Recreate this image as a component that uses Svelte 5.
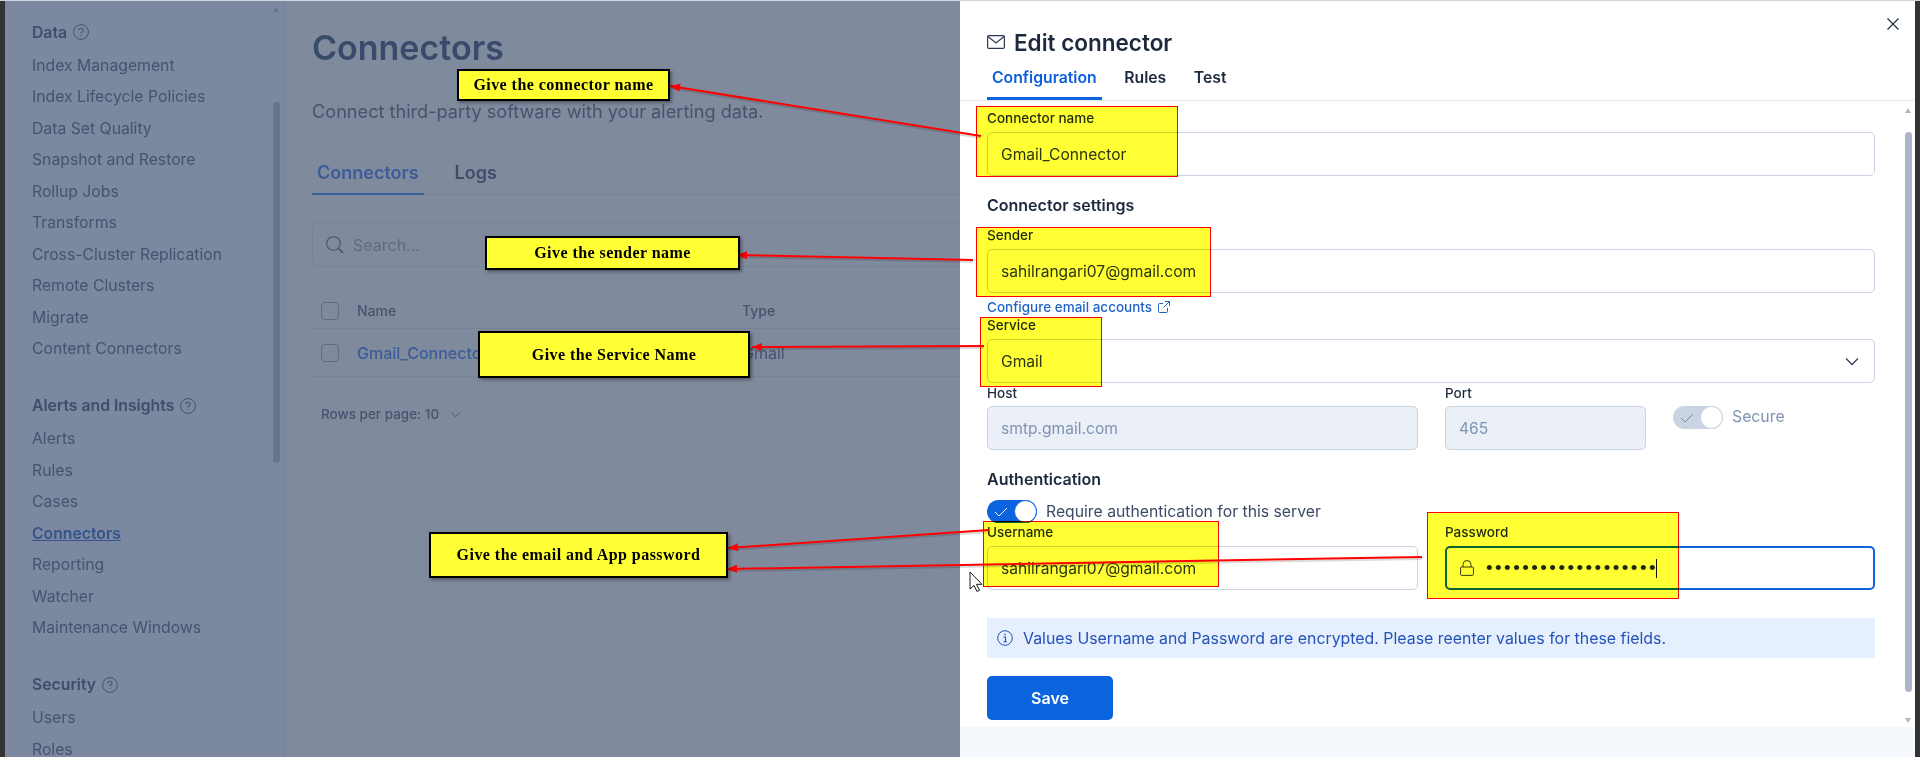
<script>
  const sections = [
    { title: 'Data', items: ['Index Management', 'Index Lifecycle Policies', 'Data Set Quality', 'Snapshot and Restore', 'Rollup Jobs', 'Transforms', 'Cross-Cluster Replication', 'Remote Clusters', 'Migrate', 'Content Connectors'] },
    { title: 'Alerts and Insights', items: ['Alerts', 'Rules', 'Cases', 'Connectors', 'Reporting', 'Watcher', 'Maintenance Windows'] },
    { title: 'Security', items: ['Users', 'Roles'] }
  ];
  const highlights = [
    { k: 'h1', x: 976, y: 106, w: 202, h: 71 },
    { k: 'h2', x: 976, y: 227, w: 235, h: 70 },
    { k: 'h3', x: 980, y: 317, w: 122, h: 70 },
    { k: 'h4', x: 983, y: 521, w: 236, h: 66 },
    { k: 'h5', x: 1427, y: 512, w: 252, h: 87 }
  ];
  const callouts = [
    { t: 'Give the connector name', x: 457, y: 69, w: 213, h: 32 },
    { t: 'Give the sender name', x: 485, y: 236, w: 255, h: 34 },
    { t: 'Give the Service Name', x: 478, y: 331, w: 272, h: 47 },
    { t: 'Give the email and App password', x: 429, y: 532, w: 299, h: 46 }
  ];
  const arrows = [
    [981, 136, 670, 86],
    [973, 260, 737, 255],
    [984, 346, 752, 347],
    [989, 530, 728, 548],
    [1422, 557, 727, 569]
  ];
  function head(a) {
    const [x1, y1, x2, y2] = a;
    const l = Math.hypot(x1 - x2, y1 - y2);
    const ux = (x1 - x2) / l, uy = (y1 - y2) / l;
    const bx = x2 + ux * 10, by = y2 + uy * 10;
    return `${x2},${y2} ${bx - uy * 4},${by + ux * 4} ${bx + uy * 4},${by - ux * 4}`;
  }
</script>

<div class="page">
  <div class="topline"></div>
  <div class="shell">
    <div class="strip"></div>

    <aside class="sidebar">
      <nav class="nav">
        {#each sections as s}
          <section class="sec">
            <h3 class="sec-title">{s.title}
              <svg class="help" viewBox="0 0 16 16" fill="none" stroke="currentColor"><circle cx="8" cy="8" r="7.4" stroke-width="1"/><path d="M5.9 6.2c0-1.2 1-2 2.1-2s2.1.8 2.1 1.9c0 1.700-2.100 1.700-2.100 3.500" stroke-width="1.100"/><circle cx="8" cy="11.600" r=".5" fill="currentColor" stroke="none"/></svg>
            </h3>
            {#each s.items as it}
              <a class="nav-item" class:active={it === 'Connectors'}>{it}</a>
            {/each}
          </section>
        {/each}
      </nav>
      <div class="side-scroll">
        <i class="arrow-up dim"></i>
        <i class="thumb dimthumb"></i>
      </div>
    </aside>

    <main class="main">
      <h1 class="page-title">Connectors</h1>
      <p class="sub">Connect third-party software with your alerting data.</p>
      <div class="main-tabs">
        <span class="mtab on">Connectors</span>
        <span class="mtab">Logs</span>
      </div>
      <div class="search">
        <svg class="search-ic" viewBox="0 0 18 18" fill="none" stroke="currentColor"><circle cx="7.500" cy="7.500" r="6.800" stroke-width="1.100"/><path d="M12.500 12.500l4.500 4.500" stroke-width="1.600"/></svg>
        <span>Search...</span>
      </div>
      <div class="trow thead">
        <span class="cb"></span><span class="c-name">Name</span><span class="c-type">Type</span>
      </div>
      <div class="trow tbody">
        <span class="cb"></span><span class="c-name link">Gmail_Connector</span><span class="c-type">Gmail</span>
      </div>
      <div class="rows">Rows per page: 10
        <svg class="rows-ic" viewBox="0 0 12 8" fill="none" stroke="currentColor"><path d="M1 1.500l5 5 5-5"/></svg>
      </div>
    </main>

    <section class="panel">
      <header class="p-head">
        <div class="p-title-row">
          <svg class="mail" viewBox="0 0 18 14" fill="none" stroke="currentColor"><rect x=".6" y=".6" width="16.800" height="12.800" rx="1.200" stroke-width="1.200"/><path d="M1 1.500l8 6.500 8-6.500" stroke-width="1.100"/></svg>
          <h2 class="p-title">Edit connector</h2>
          <svg class="close" viewBox="0 0 12 12" fill="none" stroke="currentColor"><path d="M.5.500l11 11M11.500.500l-11 11" stroke-width="1.100"/></svg>
        </div>
        <div class="p-tabs">
          <span class="ptab on">Configuration</span>
          <span class="ptab">Rules</span>
          <span class="ptab">Test</span>
        </div>
      </header>

      <div class="p-body">
        <form class="form">
          <div class="lbl first">Connector name</div>
          <div class="input">Gmail_Connector</div>

          <h4 class="subhead settings">Connector settings</h4>

          <div class="lbl">Sender</div>
          <div class="input">sahilrangari07@gmail.com</div>
          <div class="cfg">Configure email accounts
            <svg class="ext" viewBox="0 0 12 12" fill="none" stroke="currentColor"><path d="M9.500 7v3.500a1 1 0 0 1-1 1h-7a1 1 0 0 1-1-1v-7a1 1 0 0 1 1-1H5M7 .5h4.500V5M11.500.5L5.500 6.500"/></svg>
          </div>

          <div class="lbl">Service</div>
          <div class="input select">Gmail
            <svg class="chev" viewBox="0 0 14 9" fill="none" stroke="currentColor"><path d="M1 1.500l6 6 6-6" stroke-width="1.300"/></svg>
          </div>

          <div class="host-row">
            <div class="col-host">
              <div class="lbl tight">Host</div>
              <div class="input off">smtp.gmail.com</div>
            </div>
            <div class="col-port">
              <div class="lbl tight">Port</div>
              <div class="input off">465</div>
            </div>
            <div class="secure">
              <span class="switch grey">
                <svg viewBox="0 0 14 10" fill="none" stroke="currentColor"><path d="M1 5l4 4 8-8"/></svg>
                <b></b>
              </span>
              <span>Secure</span>
            </div>
          </div>

          <h4 class="subhead auth">Authentication</h4>
          <div class="auth-toggle">
            <span class="switch blue">
              <svg viewBox="0 0 14 10" fill="none" stroke="currentColor"><path d="M1 5l4 4 8-8"/></svg>
              <b></b>
            </span>
            <span>Require authentication for this server</span>
          </div>

          <div class="cred-row">
            <div class="col-host">
              <div class="lbl">Username</div>
              <div class="input">sahilrangari07@gmail.com</div>
            </div>
            <div class="col-pass">
              <div class="lbl">Password</div>
              <div class="input focus">
                <svg class="lock" viewBox="0 0 14 16" fill="none" stroke="currentColor"><rect x=".6" y="7" width="12.800" height="8.400" rx="1"/><path d="M3 7V4.500a4 4 0 0 1 8 0V7"/></svg>
                <span class="dots">•••••••••••••••••••</span><i class="caret"></i>
              </div>
            </div>
          </div>

          <div class="info">
            <svg class="info-ic" viewBox="0 0 16 16" fill="none" stroke="currentColor"><circle cx="8" cy="8" r="7.300"/><path d="M6.500 7h2v4.800M6.300 11.800h3.600" stroke-width="1.100"/><circle cx="8" cy="4.500" r=".8" fill="currentColor" stroke="none"/></svg>
            <span>Values Username and Password are encrypted. Please reenter values for these fields.</span>
          </div>

          <button class="save" type="button">Save</button>
        </form>
        <div class="panel-scroll">
          <i class="arrow-up"></i>
          <i class="thumb"></i>
          <i class="arrow-down"></i>
        </div>
      </div>
      <footer class="p-foot"></footer>
    </section>

    <div class="strip"></div>
  </div>

  {#each highlights as h}
    <div class="hl" style="left:{h.x}px;top:{h.y}px;width:{h.w}px;height:{h.h}px"></div>
  {/each}

  <svg class="arrows" viewBox="0 0 1920 757">
    {#each arrows as a}
      <line x1={a[0]} y1={a[1] + 2} x2={a[2]} y2={a[3] + 2} stroke="#000" stroke-opacity=".14" stroke-width="2"/>
      <line x1={a[0]} y1={a[1]} x2={a[2]} y2={a[3]} stroke="#ff0000" stroke-width="2"/>
      <polygon points={head(a)} fill="#ff0000"/>
    {/each}
    <path d="M970 572v17l4-3.500 3 6 2.500-1.200-3-6h5.500z" fill="#fff" stroke="#1a1a1a" stroke-width="1"/>
  </svg>

  {#each callouts as c}
    <div class="callout" style="left:{c.x}px;top:{c.y}px;width:{c.w}px;height:{c.h}px">{c.t}</div>
  {/each}
</div>

<style>
  :global(body) { margin: 0; }
  * { box-sizing: border-box; }
  .page {
    position: relative;
    width: 1920px;
    height: 757px;
    overflow: hidden;
    font-family: Inter, "Liberation Sans", sans-serif;
    background: #333;
  }
  .topline { height: 1px; background: #cfd5df; }
  .shell { display: flex; height: 756px; }
  .strip { width: 5px; flex: none; background: #333; }

  .sidebar {
    width: 280px; flex: none; display: flex;
    background: #7c889f;
    border-right: 1px solid #75829a;
    color: #45536f;
  }
  .nav { flex: 1; padding: 15px 0 0 27px; overflow: hidden; }
  .sec { margin-bottom: 24.500px; }
  .sec-title {
    display: flex; align-items: center; gap: 6px;
    height: 32px; margin: 0 0 2px;
    font-size: 15.750px; font-weight: 600; color: #3f4d6b;
  }
  .help { width: 16px; height: 16px; color: #45536f; }
  .nav-item { display: block; height: 31.500px; padding-top: 7.500px; line-height: 16px; font-size: 15.750px; white-space: nowrap; }
  .nav-item.active { color: #34538f; font-weight: 600; text-decoration: underline; }
  .side-scroll { width: 10px; margin-right: 3px; flex: none; display: flex; flex-direction: column; align-items: center; padding-top: 6px; }
  .side-scroll .thumb { height: 361px; margin-top: 90px; }
  .arrow-up, .arrow-down { display: block; width: 0; height: 0; border-left: 3.500px solid transparent; border-right: 3.500px solid transparent; }
  .arrow-up { border-bottom: 5px solid #adb6c6; }
  .arrow-down { border-top: 5px solid #adb6c6; }
  .arrow-up.dim { border-bottom-color: #667490; }
  .thumb { display: block; width: 7px; border-radius: 4px; background: #adb6c6; }
  .dimthumb { background: #667490; }

  .main {
    flex: 1; min-width: 0; overflow: hidden;
    background: #808a9d;
    padding: 0 0 0 27px;
    color: #45536f;
  }
  .page-title { margin: 25px 0 0; height: 44px; line-height: 44px; font-size: 34px; font-weight: 600; color: #3a4a6b; }
  .sub { margin: 29px 0 0; height: 24px; line-height: 24px; font-size: 18.150px; color: #45536f; }
  .main-tabs { display: flex; gap: 26px; margin-top: 37px; height: 35px; border-bottom: 1px solid #76829a; }
  .mtab { font-size: 18px; font-weight: 600; height: 35px; line-height: 26px; padding: 0 5px; color: #3f4d6b; }
  .mtab.on { color: #3a5c99; border-bottom: 2px solid #3a5c99; }
  .search {
    display: flex; align-items: center; gap: 9px;
    height: 45px; margin: 27px -20px 0 0; padding-left: 13px;
    border: 1px solid #75829a; border-radius: 6px;
    font-size: 16px; color: #5f6c85;
  }
  .search-ic { width: 18px; height: 18px; color: #45536f; }
  .trow { display: flex; align-items: center; padding-left: 9px; border-bottom: 1px solid #76829a; }
  .thead { height: 41px; margin-top: 21px; font-size: 14px; font-weight: 500; padding-top: 5px; }
  .tbody { height: 48px; font-size: 16px; }
  .cb { width: 18px; height: 18px; border: 1px solid #5f6c85; border-radius: 4px; flex: none; }
  .c-name { width: 385px; margin-left: 18px; flex: none; }
  .link { color: #3a5c99; font-weight: 500; }
  .rows { display: flex; align-items: center; height: 20px; margin: 27px 0 0 9px; font-size: 13.500px; font-weight: 500; }
  .rows-ic { width: 11px; height: 7px; margin-left: 11px; }

  .panel { width: 955px; flex: none; display: flex; flex-direction: column; background: #fff; color: #343d50; }
  .p-head { height: 100px; flex: none; border-bottom: 1px solid #e3e8f2; padding-left: 27px; }
  .p-title-row { display: flex; align-items: center; height: 30px; margin-top: 26px; }
  .mail { width: 18px; height: 14px; color: #2b3950; }
  .p-title { margin: 0 0 0 9px; font-size: 22.500px; font-weight: 600; color: #1d2a3e; }
  .close { width: 12px; height: 12px; align-self: flex-start; margin-left: auto; margin-right: 16px; margin-top: -9px; color: #1d2a3e; }
  .p-tabs { display: flex; gap: 17.500px; margin-top: 6px; height: 37px; }
  .ptab { padding: 0 5px; height: 37px; line-height: 30px; font-size: 15.750px; font-weight: 600; color: #1d2a3e; }
  .ptab.on { color: #0b5fdc; border-bottom: 3px solid #0b64dd; }

  .p-body { flex: 1; min-height: 0; display: flex; }
  .form { width: 915px; padding: 0 0 0 27px; flex: none; }
  .lbl { height: 20px; line-height: 20px; margin-bottom: 4px; font-size: 13.500px; font-weight: 500; color: #1d2a3e; }
  .lbl.first { margin-top: 7px; }
  .lbl.tight { margin-bottom: 3px; }
  .input {
    display: flex; align-items: center;
    height: 44px; padding-left: 13px;
    border: 1px solid #cad3e2; border-radius: 5px;
    font-size: 15.600px; color: #2b3648; background: #fff;
  }
  .subhead { margin: 0; height: 22px; line-height: 22px; font-size: 16px; font-weight: 600; color: #1d2a3e; }
  .settings { margin: 18px 0 9px; }
  .cfg { display: flex; align-items: center; gap: 6px; height: 16px; margin-top: 6px; font-size: 13.500px; font-weight: 500; color: #1f63c8; }
  .ext { width: 12px; height: 12px; }
  .select { position: relative; }
  .chev { width: 14px; height: 9px; margin-left: auto; margin-right: 15px; color: #343d50; }
  .host-row, .cred-row { display: flex; }
  .col-host { width: 431px; flex: none; }
  .col-port { width: 201px; flex: none; margin-left: 27px; }
  .col-pass { width: 430px; flex: none; margin-left: 27px; }
  .off { background: #ebeff8; color: #8093b3; }
  .secure { display: flex; align-items: flex-start; gap: 9px; margin: 23px 0 0 27px; font-size: 15.800px; color: #8093b3; line-height: 22px; }
  .switch { position: relative; display: block; width: 50px; height: 23px; border-radius: 12px; flex: none; }
  .switch svg { position: absolute; left: 7px; top: 7px; width: 14px; height: 10px; color: #fff; }
  .switch b { position: absolute; right: 0; top: 0; width: 23px; height: 23px; border-radius: 50%; background: #fff; border: 1px solid #0b64dd; }
  .switch.grey { background: #c9d3e2; }
  .switch.grey svg { color: #7a8aa8; }
  .switch.grey b { border-color: #c9d3e2; }
  .switch.blue { background: #0b64dd; }
  .auth { margin: 18px 0 11px; }
  .auth-toggle { display: flex; align-items: center; gap: 9px; height: 21px; font-size: 15.750px; color: #3c4a66; }
  .cred-row { margin-top: 0; }
  .focus { border: 2px solid #0b64dd; padding-left: 13px; }
  .lock { width: 14px; height: 16px; color: #343d50; }
  .dots { margin-left: 12px; font-size: 19px; letter-spacing: 2.400px; color: #1d2a3e; font-family: "Liberation Sans", sans-serif; }
  .caret { display: block; width: 1px; height: 19px; margin-left: -2px; background: #111; }
  .info {
    display: flex; align-items: center; gap: 10px;
    height: 40px; margin-top: 28px; padding-left: 10px;
    background: #e5effd; color: #2452b8; font-size: 15.880px;
  }
  .info-ic { width: 16px; height: 16px; flex: none; }
  .save {
    display: block; width: 126px; height: 44px; margin-top: 18px;
    border: 0; border-radius: 5px; background: #0b64dd; color: #fff;
    font: 600 16px Inter, "Liberation Sans", sans-serif;
  }
  .panel-scroll { flex: none; width: 10px; margin-left: 28px; display: flex; flex-direction: column; align-items: center; padding-top: 7px; }
  .panel-scroll .thumb { height: 560px; margin-top: 19px; }
  .panel-scroll .arrow-down { margin-top: 26px; }
  .p-foot { height: 30px; flex: none; background: #f5f8fc; }

  .hl {
    position: absolute;
    background: #ffff33;
    border: 1px solid #ff0000;
    mix-blend-mode: multiply;
  }
  .arrows { position: absolute; left: 0; top: 0; width: 1920px; height: 757px; pointer-events: none; }
  .callout {
    position: absolute;
    display: flex; align-items: center; justify-content: center;
    background: #ffff33; border: 2px solid #000;
    box-shadow: 2px 2px 3px rgba(0,0,0,.35);
    font: 700 16px "Liberation Serif", serif;
    letter-spacing: .45px;
    color: #000;
  }
</style>
